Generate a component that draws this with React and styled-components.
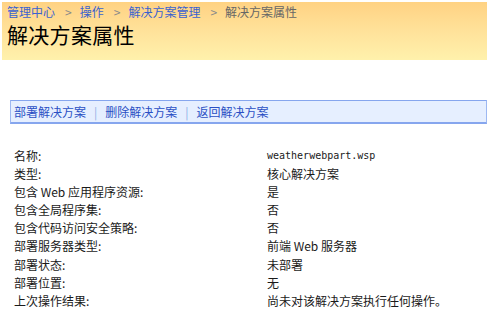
import React from "react";
import styled, { createGlobalStyle } from "styled-components";

const GlobalStyle = createGlobalStyle`
  html, body {
    margin: 0;
    padding: 0;
    background: #ffffff;
  }
  body {
    font-family: "Noto Sans CJK SC", "Liberation Sans", sans-serif;
    font-size: 12px;
  }
`;

const Page = styled.div`
  width: 489px;
  height: 317px;
  padding: 2px 2px 0 2px;
  box-sizing: border-box;
  overflow: hidden;
`;

const Header = styled.div`
  height: 58px;
  padding: 2px 0 0 5px;
  box-sizing: border-box;
  background-color: #ffe7a0;
  background-image: linear-gradient(to bottom, #ffd283 0%, #ffe29a 50%, #fff1ac 100%);
`;

const Breadcrumb = styled.div`
  display: flex;
  align-items: center;
  height: 16px;
  line-height: 16px;
  font-size: 12px;
`;

const Crumb = styled.a`
  color: ${(p) => (p.$current ? "#666666" : "#3a62d0")};
  text-decoration: none;
  cursor: ${(p) => (p.$current ? "default" : "pointer")};
`;

const Arrow = styled.span`
  color: #8a8a8a;
  padding: 0 8px 0 10px;
`;

const Title = styled.h1`
  margin: 1px 0 0 0;
  font-size: 21px;
  font-weight: normal;
  line-height: 26px;
  color: #000000;
  letter-spacing: 0.3px;
`;

const Toolbar = styled.div`
  display: flex;
  align-items: center;
  margin: 40px 0 0 8px;
  height: 24px;
  padding-left: 3px;
  box-sizing: border-box;
  border-top: 1px solid #86a6ee;
  border-bottom: 2px solid #86a6ee;
  border-left: 1px solid #9db8f2;
  border-right: 1px solid #9db8f2;
  background: #e6efff;
`;

const ToolLink = styled.a`
  color: #2a4fc4;
  text-decoration: none;
  font-size: 12px;
  line-height: 16px;
  cursor: pointer;
`;

const Divider = styled.span`
  color: #8fb0e6;
  padding: 0 8px;
  line-height: 16px;
`;

const Details = styled.div`
  display: grid;
  grid-template-columns: 253px 1fr;
  grid-auto-rows: 18.1px;
  margin: 23px 0 0 12px;
  font-size: 12px;
  line-height: 18px;
  color: #1a1a1a;
`;

const Label = styled.div`
  white-space: nowrap;
`;

const Value = styled.div`
  white-space: nowrap;
  font-family: ${(p) => (p.$mono ? '"DejaVu Sans Mono", "Liberation Mono", monospace' : "inherit")};
  font-size: ${(p) => (p.$mono ? "10px" : "12px")};
`;

const rows = [
  ["名称:", "weatherwebpart.wsp", true],
  ["类型:", "核心解决方案"],
  ["包含 Web 应用程序资源:", "是"],
  ["包含全局程序集:", "否"],
  ["包含代码访问安全策略:", "否"],
  ["部署服务器类型:", "前端 Web 服务器"],
  ["部署状态:", "未部署"],
  ["部署位置:", "无"],
  ["上次操作结果:", "尚未对该解决方案执行任何操作。"],
];

export default function App() {
  return (
    <Page>
      <GlobalStyle />
      <Header>
        <Breadcrumb>
          <Crumb>管理中心</Crumb>
          <Arrow>&gt;</Arrow>
          <Crumb>操作</Crumb>
          <Arrow>&gt;</Arrow>
          <Crumb>解决方案管理</Crumb>
          <Arrow>&gt;</Arrow>
          <Crumb $current>解决方案属性</Crumb>
        </Breadcrumb>
        <Title>解决方案属性</Title>
      </Header>
      <Toolbar>
        <ToolLink>部署解决方案</ToolLink>
        <Divider>|</Divider>
        <ToolLink>删除解决方案</ToolLink>
        <Divider>|</Divider>
        <ToolLink>返回解决方案</ToolLink>
      </Toolbar>
      <Details>
        {rows.map(([label, value, mono]) => (
          <React.Fragment key={label}>
            <Label>{label}</Label>
            <Value $mono={mono}>{value}</Value>
          </React.Fragment>
        ))}
      </Details>
    </Page>
  );
}
